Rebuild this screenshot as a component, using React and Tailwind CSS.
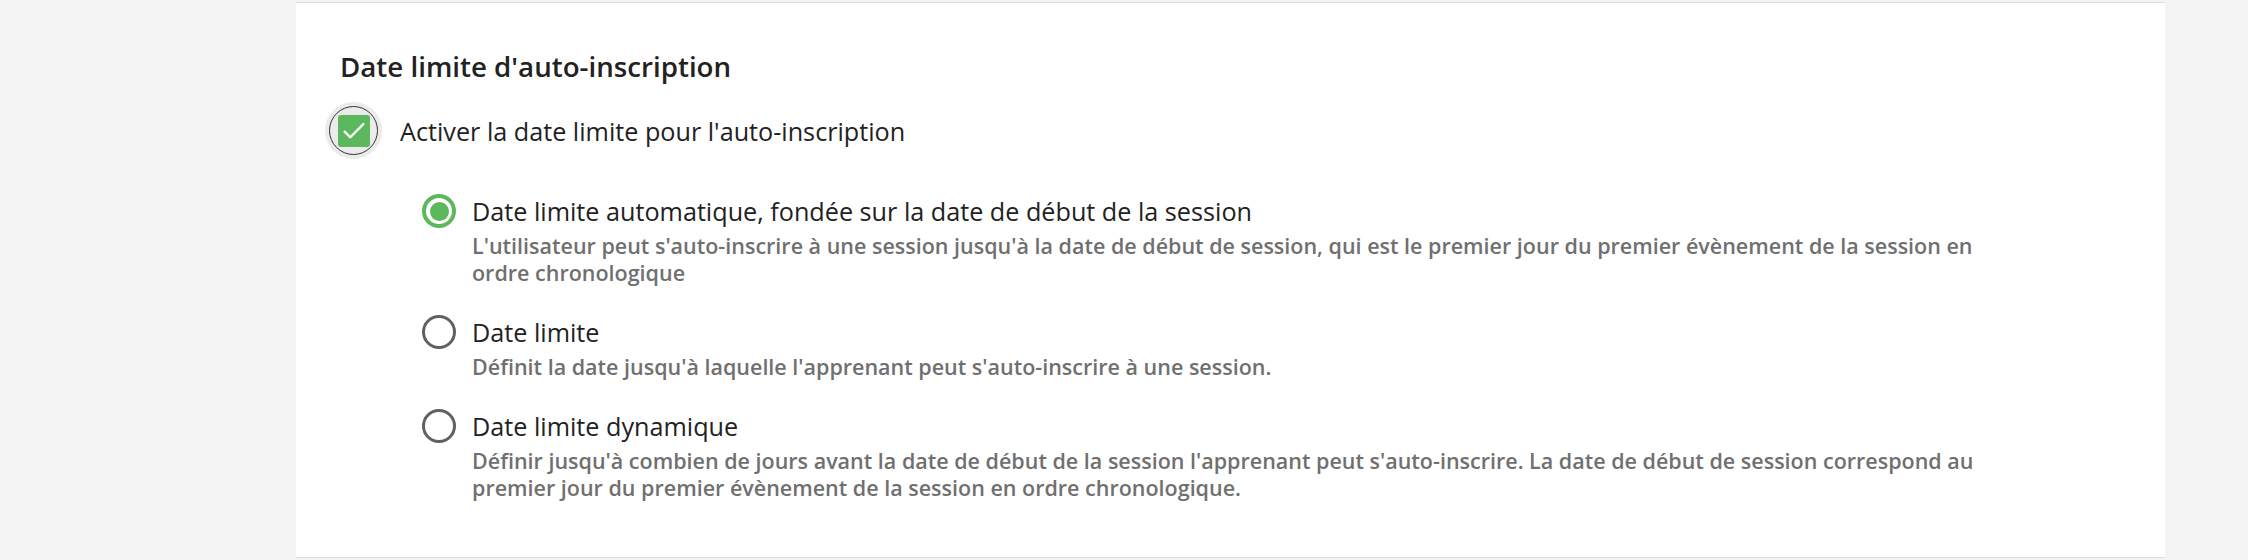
import React, { useState } from "react";

const options = [
  {
    id: "auto",
    label: "Date limite automatique, fondée sur la date de début de la session",
    help: "L'utilisateur peut s'auto-inscrire à une session jusqu'à la date de début de session, qui est le premier jour du premier évènement de la session en ordre chronologique",
  },
  {
    id: "fixed",
    label: "Date limite",
    help: "Définit la date jusqu'à laquelle l'apprenant peut s'auto-inscrire à une session.",
  },
  {
    id: "dynamic",
    label: "Date limite dynamique",
    help: "Définir jusqu'à combien de jours avant la date de début de la session l'apprenant peut s'auto-inscrire. La date de début de session correspond au premier jour du premier évènement de la session en ordre chronologique.",
  },
];

const Radio = ({ checked }) => (
  <span
    className={
      "mt-[-2px] flex h-[34px] w-[34px] shrink-0 items-center justify-center rounded-full " +
      (checked ? "border-[4px] border-[#5cb85c]" : "border-[3px] border-[#616161]")
    }
  >
    {checked && <span className="h-[19px] w-[19px] rounded-full bg-[#5cb85c]" />}
  </span>
);

export default function App() {
  const [enabled, setEnabled] = useState(true);
  const [choice, setChoice] = useState("auto");

  return (
    <div
      className="h-[560px] w-full bg-[#f4f4f4] pt-[2px]"
      style={{ fontFamily: '"Open Sans", "Noto Sans", sans-serif' }}
    >
      <div className="ml-[296px] h-[556px] w-[1869px] border-y border-[#e0e0e0] bg-white pl-[44px] pt-[45px]">
        <h2 className="text-[27.7px] leading-[36px] font-semibold text-[#222222]">
          Date limite d'auto-inscription
        </h2>

        {/* case à cocher */}
        <button
          type="button"
          onClick={() => setEnabled(!enabled)}
          className="mt-[18px] -ml-[15px] flex items-center gap-[18px]"
        >
          <span className="flex h-[57px] w-[57px] items-center justify-center rounded-full bg-[#ebebeb]">
            <span className="flex h-[49px] w-[49px] items-center justify-center rounded-full border border-[#333333]">
              <span
                className={
                  "flex h-[32px] w-[32px] items-center justify-center rounded-[3px] " +
                  (enabled ? "bg-[#5cb85c]" : "bg-white border border-[#666666]")
                }
              >
                {enabled && (
                  <svg width="30" height="30" viewBox="0 0 24 24" fill="none">
                    <path
                      d="M4.5 12.5l4.5 4.5L19.5 6.5"
                      stroke="white"
                      strokeWidth="1.9"
                      strokeLinecap="round"
                      strokeLinejoin="round"
                    />
                  </svg>
                )}
              </span>
            </span>
          </span>
          <span className="text-[25.2px] leading-[32px] text-[#222222]">
            Activer la date limite pour l'auto-inscription
          </span>
        </button>

        <div className="mt-[37px] ml-[82px] flex flex-col gap-[31px]">
          {options.map((opt) => (
            <label
              key={opt.id}
              className="flex cursor-pointer items-start gap-[16px]"
              onClick={() => setChoice(opt.id)}
            >
              <Radio checked={choice === opt.id} />
              <div className="max-w-[1530px]">
                <p className="text-[25.2px] leading-[30px] text-[#222222]">{opt.label}</p>
                <p className="mt-[6px] text-[21.5px] leading-[27px] font-semibold text-[#707070]">
                  {opt.help}
                </p>
              </div>
            </label>
          ))}
        </div>
      </div>
    </div>
  );
}
